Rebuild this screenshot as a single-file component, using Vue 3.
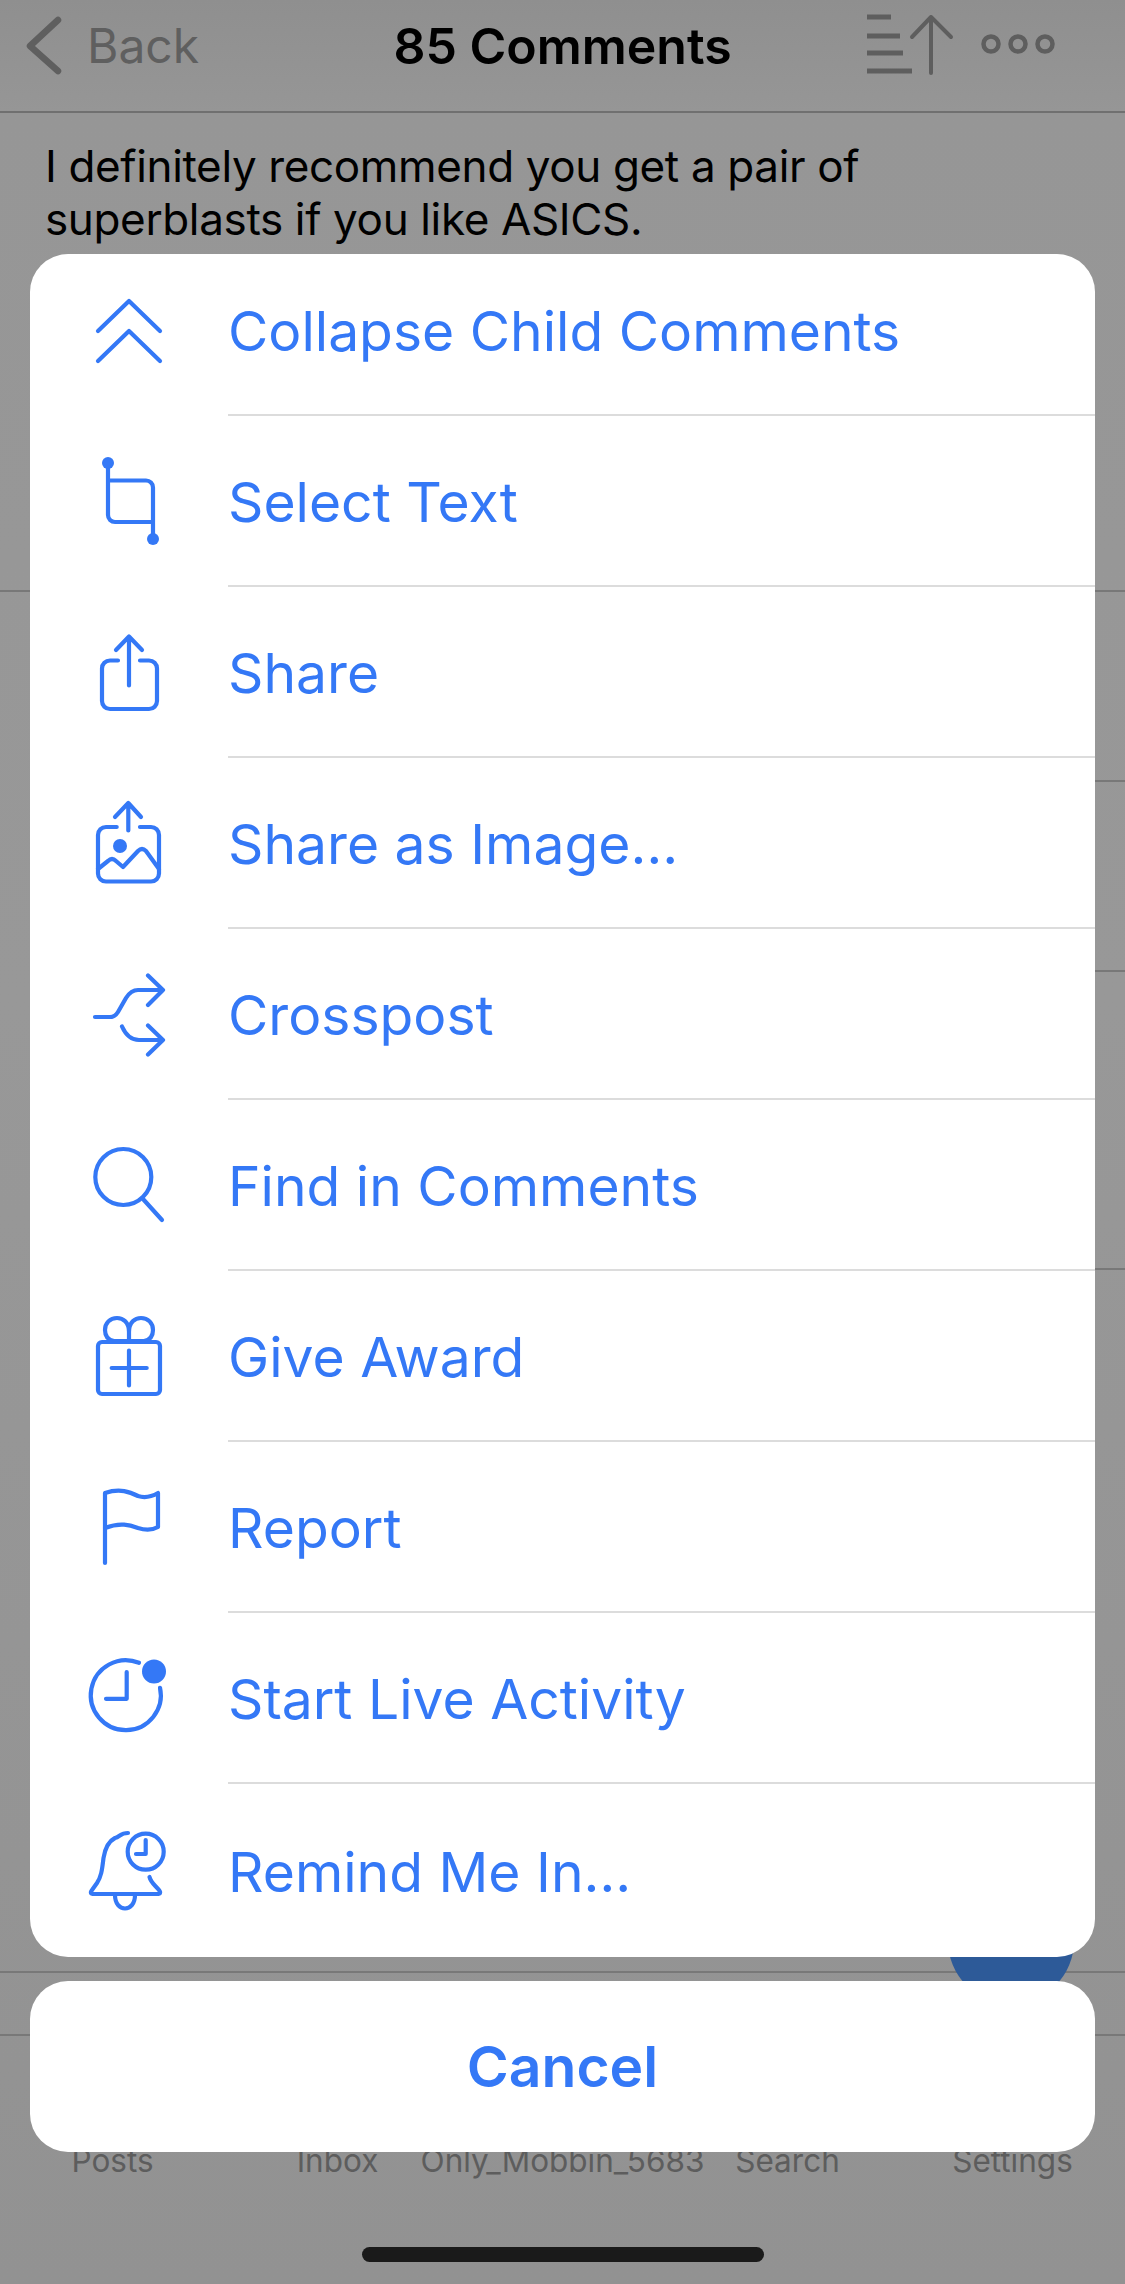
<template>
  <div class="screen">
    <header class="nav">
      <div class="back">
        <svg width="36" height="60" viewBox="0 0 36 60"><path d="M32 4L4 30L32 55" /></svg>
        <span>Back</span>
      </div>
      <div class="title">85 Comments</div>
      <svg class="tools" width="190" height="70" viewBox="0 0 190 70">
        <path class="bars" d="M0 7h24M0 26h33M0 43h36M0 61h45" />
        <path class="arrow" d="M64 63V7M45 27L64 7L84 27" />
        <circle cx="124" cy="34" r="7.5" /><circle cx="151" cy="34" r="7.5" /><circle cx="178" cy="34" r="7.5" />
      </svg>
    </header>

    <div class="thread">
      <div
        v-for="(c, i) in thread"
        :key="i"
        class="thread-row"
        :class="{ nested: c.nested }"
        :style="{ height: c.height + 'px' }"
      >
        <p v-if="i === 0">I definitely recommend you get a pair of<br>superblasts if you like ASICS.</p>
      </div>
    </div>

    <footer class="footer">
      <nav class="tabs">
        <span v-for="t in tabs" :key="t">{{ t }}</span>
      </nav>
      <div class="home-bar"></div>
    </footer>

    <div class="fab"></div>

    <div class="sheet">
      <div class="menu">
        <div class="row" v-for="item in items" :key="item.label">
          <svg class="icon" width="90" height="90" viewBox="0 0 90 90" v-html="item.svg"></svg>
          <div class="label">{{ item.label }}</div>
        </div>
      </div>
      <div class="cancel">Cancel</div>
    </div>
  </div>
</template>

<script setup>
  const tabs = ['Posts', 'Inbox', 'Only_Mobbin_5683', 'Search', 'Settings'];

  const thread = [
    { height: 479 },
    { height: 190, nested: true },
    { height: 190, nested: true },
    { height: 298, nested: true },
    { height: 703 },
    { height: 63 },
  ];

  const items = [
    { label: 'Collapse Child Comments', svg: '<path d="M14 42L45 12L76 42M14 72L45 42L76 72"/>' },
    { label: 'Select Text', svg: '<path d="M24 8V60a7 7 0 0 0 7 7H69M24 25.5H62a7 7 0 0 1 7 7V84"/><circle class="solid" cx="24" cy="8" r="6"/><circle class="solid" cx="69" cy="84" r="6"/>' },
    { label: 'Share', svg: '<path d="M34 34.5H26a8 8 0 0 0-8 8V75a8 8 0 0 0 8 8H65a8 8 0 0 0 8-8V42.5a8 8 0 0 0-8-8H56M45 59.5V10.5M32 24L45 10.5L58 24"/>' },
    { label: 'Share as Image…', svg: '<path d="M32.7 30H22a8 8 0 0 0-8 8V76.5a8 8 0 0 0 8 8H67a8 8 0 0 0 8-8V38a8 8 0 0 0-8-8H56M44.3 33.5V6M31 20L44.3 6L57 20"/><circle class="solid" cx="36" cy="49" r="7"/><path d="M14 72L24 64Q28 60 32 64L39 70L54 54Q58 50 62 54L75 72"/>' },
    { label: 'Crosspost', svg: '<path d="M11 49H26Q31 49 34 44L42 30Q47 22 54 22H79M64 7.5L79 22L64 37M38 58.5Q44 72 55 72H79M64 57.5L79 72L64 86.5"/>' },
    { label: 'Find in Comments', svg: '<circle cx="39.3" cy="38" r="28"/><path d="M59 60L78 81"/>' },
    { label: 'Give Award', svg: '<rect x="14" y="32" width="62" height="52" rx="4"/><path d="M45 31V22C45 12 39 8 33 8C26 8 21 13 21 20C21 26 24 30 30 31H60C66 30 69 26 69 20C69 13 64 8 57 8C51 8 45 12 45 22M45 40.5V75.5M27.7 58H62.7"/>' },
    { label: 'Report', svg: '<path d="M21 82V12C36 7 46 11 54 15C60 17 67 16 74 12V46C67 50 60 49 54 47C46 44 36 41 21 47"/>' },
    { label: 'Start Live Activity', svg: '<path d="M55 10.8A35 35 0 1 0 76 35.8M42.7 20V46.8H22"/><circle class="solid" cx="70" cy="19.5" r="12"/>' },
    { label: 'Remind Me In…', svg: '<path d="M44 8C36 8 36 12 31 13C25 16 21 24 19.5 33C18 46 17 52 13 58L8 65Q5 69 10 69H73Q78 69 75 65C71 60 67 58 65.5 52M31 70C31 88 51 88 51 70"/><circle cx="61.7" cy="26.7" r="18"/><path d="M61.7 15V29H52"/>' },
  ];
</script>

<style>
  body {
    background: #969696;
  }
</style>

<style scoped>
  .screen {
    position: relative;
    width: 1125px;
    height: 2284px;
    overflow: hidden;
    background: linear-gradient(#8f8f8f 0, #969696 112px, #989898 1000px, #929292 100%);
    font-family: Inter, "Liberation Sans", sans-serif;
  }
  .nav {
    display: grid;
    grid-template-columns: 1fr auto 1fr;
    height: 113px;
    box-sizing: border-box;
    border-bottom: 2px solid #707070;
  }
  .back {
    display: flex;
    align-items: center;
    align-self: start;
    gap: 25px;
    padding: 16px 0 0 26px;
    color: #5f5f5f;
    font-size: 48px;
    line-height: 60px;
  }
  .back path {
    fill: none;
    stroke: #5f5f5f;
    stroke-width: 6.5;
    stroke-linecap: round;
    stroke-linejoin: round;
  }
  .title {
    padding-top: 16px;
    font-size: 50px;
    line-height: 60px;
    font-weight: 600;
    color: #000;
  }
  .tools {
    justify-self: end;
    margin: 10px 68px 0 0;
    fill: none;
  }
  .bars {
    stroke: #5e5e5e;
    stroke-width: 5;
  }
  .arrow {
    stroke: #5e5e5e;
    stroke-width: 4;
    stroke-linecap: round;
    stroke-linejoin: round;
  }
  .tools circle {
    stroke: #5e5e5e;
    stroke-width: 4.5;
  }
  .thread-row {
    box-sizing: border-box;
    border-bottom: 2px solid #787878;
  }
  .thread-row.nested {
    margin-left: 60px;
  }
  .thread-row p {
    margin: 0;
    padding: 27px 45px 0;
    font-size: 44px;
    line-height: 53px;
    letter-spacing: -0.36px;
    color: #000;
  }
  .footer {
    padding-top: 107px;
  }
  .tabs {
    display: grid;
    grid-template-columns: repeat(5, 225px);
    color: #5d5d5d;
    font-size: 31.5px;
    line-height: 36px;
  }
  .tabs span {
    display: flex;
    justify-content: center;
    white-space: nowrap;
  }
  .home-bar {
    width: 402px;
    height: 15px;
    margin: 68px auto 0;
    border-radius: 8px;
    background: #1a1a1a;
  }
  .fab {
    position: absolute;
    left: 948px;
    top: 1878px;
    width: 126px;
    height: 126px;
    border-radius: 50%;
    background: #2d5a98;
  }
  .sheet {
    position: absolute;
    left: 30px;
    top: 254px;
    width: 1065px;
  }
  .menu {
    background: #fff;
    border-radius: 38px;
    overflow: hidden;
  }
  .row {
    position: relative;
    display: flex;
    align-items: center;
    height: 171px;
  }
  .row:first-child {
    height: 160px;
  }
  .row:last-child {
    height: 175px;
  }
  .row + .row::before {
    content: "";
    position: absolute;
    left: 198px;
    right: 0;
    top: 0;
    height: 2px;
    background: #dcdcdc;
  }
  .icon {
    flex: none;
    margin: 0 54px;
  }
  .icon :deep(path), .icon :deep(circle), .icon :deep(rect) {
    fill: none;
    stroke: #3478f6;
    stroke-width: 4.2;
    stroke-linecap: round;
    stroke-linejoin: round;
  }
  .icon :deep(.solid) {
    fill: #3478f6;
    stroke: none;
  }
  .label {
    padding-top: 5px;
    color: #3478f6;
    font-size: 55.2px;
    line-height: 70px;
  }
  .row:first-child .label {
    padding: 0 0 6px;
  }
  .cancel {
    margin-top: 24px;
    height: 171px;
    border-radius: 38px;
    background: #fff;
    color: #3478f6;
    font-size: 57px;
    font-weight: 600;
    display: flex;
    align-items: center;
    justify-content: center;
  }
</style>
